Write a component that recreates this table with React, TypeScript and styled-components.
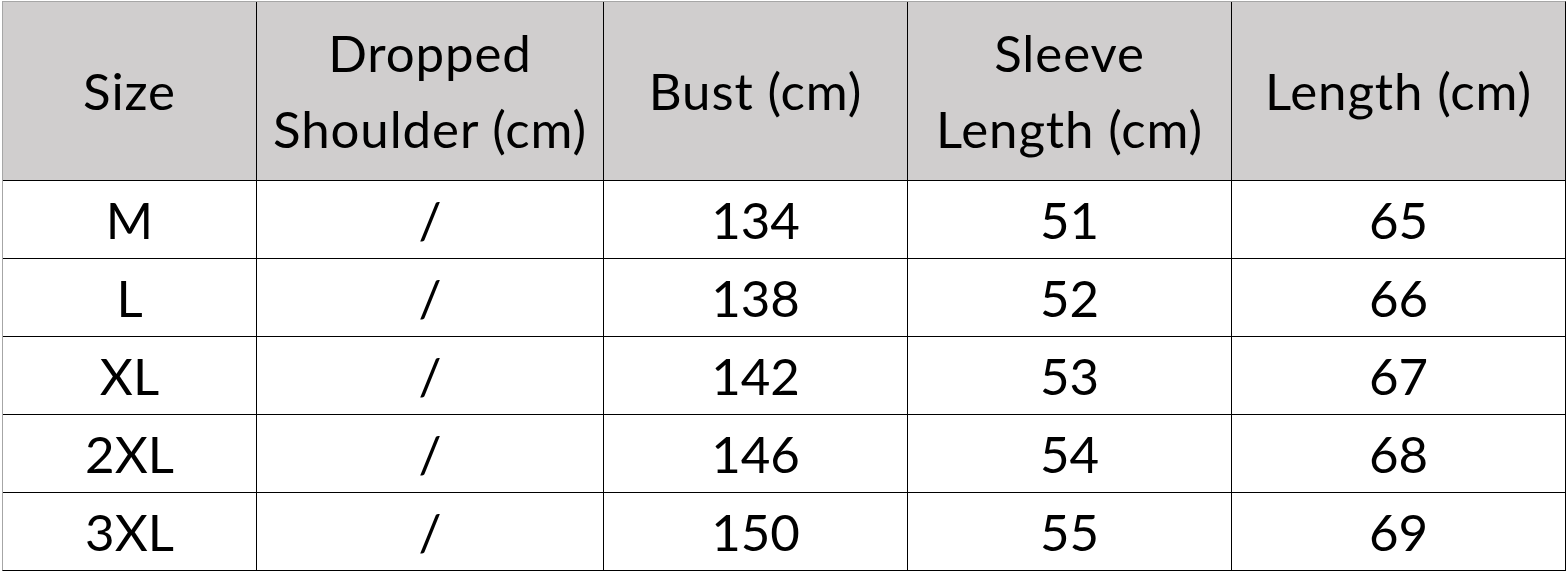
import React from "react";
import styled, { createGlobalStyle } from "styled-components";

const Global = createGlobalStyle`
  html, body { margin: 0; padding: 0; background: #ffffff; }
  body { font-family: Lato, "Open Sans", sans-serif; }
`;

const Page = styled.div`
  padding: 1px 0 0 2px;
  width: 1567px;
  height: 572px;
  box-sizing: border-box;
  background: #ffffff;
`;

const Table = styled.div`
  display: grid;
  grid-template-columns: 253px 346px 303px 323px 333px;
  grid-template-rows: 178px repeat(5, 77px);
  gap: 1px;
  background: #000000;
  border-top: 1px solid #a6a6a6;
  border-left: 1px solid #a6a6a6;
  border-right: 1px solid #000000;
  border-bottom: 1px solid #000000;
  width: fit-content;
`;

const Cell = styled.div<{ $head?: boolean }>`
  display: flex;
  align-items: center;
  justify-content: center;
  text-align: center;
  background: ${(p) => (p.$head ? "#d0cece" : "#ffffff")};
  color: #000000;
  font-family: Lato, "Open Sans", sans-serif;
  font-size: 51px;
  line-height: 76px;
  letter-spacing: ${(p) => (p.$head ? "0.9px" : "0")};
  white-space: pre-line;
`;

const headers = ["Size", "Dropped\nShoulder (cm)", "Bust (cm)", "Sleeve\nLength (cm)", "Length (cm)"];
const rows = [
  ["M", "/", "134", "51", "65"],
  ["L", "/", "138", "52", "66"],
  ["XL", "/", "142", "53", "67"],
  ["2XL", "/", "146", "54", "68"],
  ["3XL", "/", "150", "55", "69"],
];

export default function App() {
  return (
    <Page>
      <Global />
      <Table>
        {headers.map((h) => (
          <Cell key={h} $head>
            {h}
          </Cell>
        ))}
        {rows.map((r, i) => r.map((c, j) => <Cell key={`${i}-${j}`}>{c}</Cell>))}
      </Table>
    </Page>
  );
}
